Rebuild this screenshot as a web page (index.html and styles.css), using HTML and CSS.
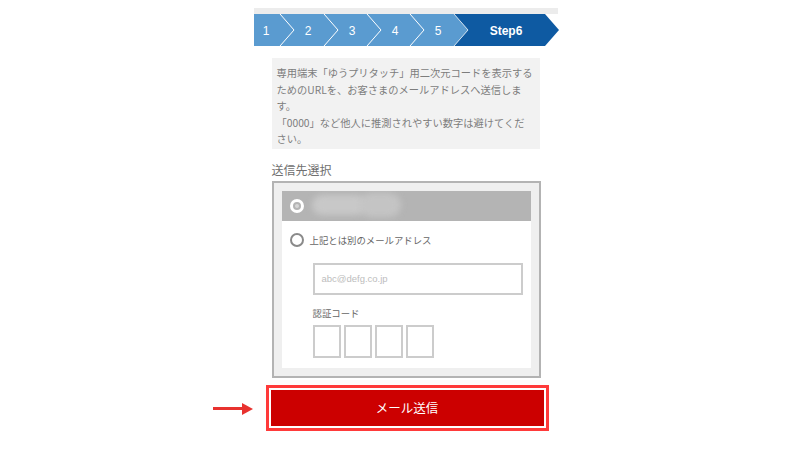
FILE: index.html
```html
<!DOCTYPE html>
<html lang="ja">
<head>
<meta charset="utf-8">
<title>メール送信</title>
<link rel="stylesheet" href="styles.css">
</head>
<body>
<div class="page">
  <div class="topstrip"></div>
  <svg class="stepper" width="305" height="32" viewBox="0 0 305 32">
    <polygon points="0,0 200,0 214,16 200,32 0,32" fill="#5a9bd0"/>
    <polygon points="200,0 291,0 305,16 291,32 200,32 214,16" fill="#0e5aa2"/>
    <g fill="none" stroke="#ffffff" stroke-width="1">
      <polyline points="26,0 40,16 26,32"/>
      <polyline points="70,0 84,16 70,32"/>
      <polyline points="113,0 127,16 113,32"/>
      <polyline points="156,0 170,16 156,32"/>
      <polyline points="200,0 214,16 200,32" stroke-opacity="0.7"/>
    </g>
    <g class="stepnum" fill="#ffffff" text-anchor="middle">
      <text x="12" y="20.5">1</text>
      <text x="54" y="20.5">2</text>
      <text x="98" y="20.5">3</text>
      <text x="141" y="20.5">4</text>
      <text x="184" y="20.5">5</text>
      <text x="252" y="20.5" class="stepcur">Step6</text>
    </g>
  </svg>

  <div class="notice">専用端末「ゆうプリタッチ」用二次元コードを表示する<br>ためのURLを、お客さまのメールアドレスへ送信しま<br>す。<br>「0000」など他人に推測されやすい数字は避けてくだ<br>さい。</div>

  <div class="label">送信先選択</div>

  <div class="selectbox">
    <div class="inner">
      <div class="row selected">
        <span class="radio on"></span>
        <span class="blur"><span class="b1"></span><span class="b2"></span></span>
      </div>
      <div class="row other">
        <span class="radio"></span>
        <span class="rowtext">上記とは別のメールアドレス</span>
      </div>
      <div class="emailinput">abc@defg.co.jp</div>
      <div class="codelabel">認証コード</div>
      <div class="codes">
        <span class="code"></span><span class="code"></span><span class="code"></span><span class="code"></span>
      </div>
    </div>
  </div>

  <div class="btnwrap">
    <span class="arrow"><span class="shaft"></span><span class="head"></span></span>
    <div class="btn">メール送信</div>
  </div>
</div>
</body>
</html>
```

FILE: styles.css
```css
html, body {
  margin: 0;
  padding: 0;
  background: #ffffff;
}
body {
  font-family: "Noto Sans CJK JP", "Noto Sans", sans-serif;
  color: #777;
}
.page {
  width: 305px;
  margin: 0 auto;
  padding-top: 8px;
}
.topstrip {
  height: 6px;
  background: #ececec;
  width: 304px;
}
.stepper {
  display: block;
}
.stepnum {
  font-family: "Liberation Sans", "Noto Sans", sans-serif;
  font-size: 12px;
}
.stepcur {
  font-weight: bold;
}
.notice {
  margin: 12px 19px 0 18px;
  background: #f2f2f2;
  padding: 7px 4px 1px 5px;
  font-size: 10.25px;
  line-height: 16.5px;
  color: #7d7d7d;
  white-space: nowrap;
}
.label {
  margin: 12px 0 0 18px;
  font-size: 12px;
  line-height: 17px;
  color: #707070;
}
.selectbox {
  margin: 3px 18px 0 18px;
  border: 2px solid #b3b3b3;
  background: #efefef;
  padding: 8px;
}
.inner {
  background: #ffffff;
  padding-bottom: 10px;
}
.row {
  display: flex;
  align-items: center;
  padding-left: 8px;
}
.row.selected {
  height: 30px;
  background: #b4b4b4;
  overflow: hidden;
}
.row.other {
  padding-top: 12px;
  height: 14px;
}
.radio {
  box-sizing: border-box;
  width: 14px;
  height: 14px;
  border-radius: 50%;
  border: 2px solid #8a8a8a;
  background: #fff;
  flex: none;
  display: flex;
  align-items: center;
  justify-content: center;
}
.radio.on {
  border: 3px solid #ffffff;
  background: #b4b4b4;
}
.radio.on::after {
  content: "";
  width: 4px;
  height: 4px;
  border-radius: 50%;
  background: #d6d6d6;
}
.blur {
  display: flex;
  margin-left: 8px;
  filter: blur(3px);
}
.blur .b1 {
  width: 55px;
  height: 20px;
  border-radius: 10px;
  background: #c8c8c8;
}
.blur .b2 {
  width: 42px;
  height: 24px;
  border-radius: 12px;
  background: #c4c4c4;
  margin-left: -8px;
  margin-top: -2px;
}
.rowtext {
  margin-left: 6px;
  font-size: 9.4px;
  color: #666;
}
.emailinput {
  margin: 16px 8px 0 31px;
  height: 28px;
  border: 2px solid #cccccc;
  padding-left: 7px;
  font-family: "Liberation Sans", "Noto Sans", sans-serif;
  font-size: 9.5px;
  line-height: 28px;
  color: #bdbdbd;
}
.codelabel {
  margin: 12px 0 0 31px;
  font-size: 9.4px;
  line-height: 13px;
  color: #666;
}
.codes {
  margin: 5px 0 0 31px;
  display: flex;
  gap: 3px;
}
.code {
  box-sizing: border-box;
  width: 28px;
  height: 33px;
  border: 2px solid #cccccc;
}
.btnwrap {
  position: relative;
  margin: 7px 10px 0 12px;
  border: 3px solid #ff3a3a;
  padding: 2px;
  background: #fff;
}
.btn {
  height: 36px;
  background: #cc0000;
  color: #ffffff;
  font-size: 12.5px;
  line-height: 36px;
  text-align: center;
}
.arrow {
  position: absolute;
  left: -56px;
  top: 15px;
  width: 40px;
  height: 12px;
  display: flex;
  align-items: center;
}
.shaft {
  width: 30px;
  height: 3px;
  background: #e8322f;
}
.head {
  width: 0;
  height: 0;
  border-top: 6px solid transparent;
  border-bottom: 6px solid transparent;
  border-left: 11px solid #e8322f;
  margin-left: -1px;
}
```
